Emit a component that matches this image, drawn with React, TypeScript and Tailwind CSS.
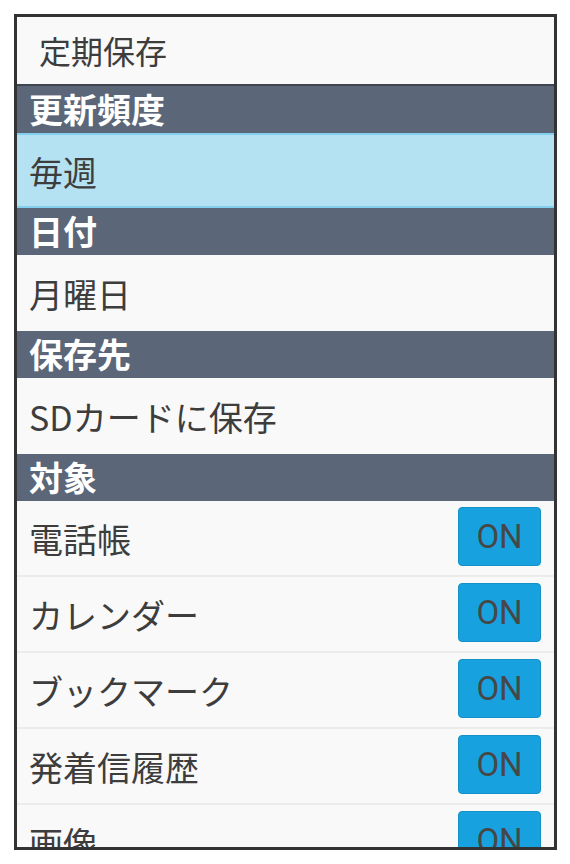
import React from "react";

const jp = { fontFamily: '"Noto Sans CJK JP", "Noto Sans", sans-serif' };

function Header({ label }: { label: string }) {
  return (
    <div className="h-[47px] shrink-0 bg-[#5b6678] flex items-center pl-[12px] text-white font-bold text-[34px] leading-none">
      <span className="-mt-[2px]">{label}</span>
    </div>
  );
}

function Row({ label, selected }: { label: string; selected?: boolean }) {
  return (
    <div
      className={
        selected
          ? "h-[75px] shrink-0 bg-[#b5e2f3] border-y-2 border-[#82d0ee] flex items-center pl-[12px] text-[34px] text-[#3d3d3d] leading-none"
          : "h-[76px] shrink-0 bg-[#f9f9f9] flex items-center pl-[12px] text-[34px] text-[#3d3d3d] leading-none"
      }
    >
      <span className="mt-[2px]">{label}</span>
    </div>
  );
}

function ToggleRow({ label }: { label: string }) {
  return (
    <div className="h-[76px] shrink-0 bg-[#f9f9f9] border-b-2 border-[#ececec] flex items-center justify-between pl-[12px] pr-[13px] text-[34px] text-[#3d3d3d] leading-none">
      <span className="mt-[2px]">{label}</span>
      <div
        className="w-[83px] h-[59px] mb-[3px] rounded-[4px] bg-[#17a2df] border border-[#1591c8] flex items-center justify-center text-[33px] text-[#474747]"
        style={{ fontFamily: 'Roboto, "Liberation Sans", sans-serif' }}
      >
        ON
      </div>
    </div>
  );
}

export default function App() {
  return (
    <div className="w-[570px] h-[864px] bg-white pt-[14px] pl-[14px]" style={jp}>
      <div className="w-[543px] h-[836px] border-[3px] border-[#333333] overflow-hidden flex flex-col bg-[#f9f9f9]">
        <div className="h-[69px] shrink-0 bg-[#f9f9f9] border-b-2 border-[#3f4550] flex items-center pl-[22px] text-[32px] text-[#3d3d3d] leading-none">
          <span className="-mt-[2px]">定期保存</span>
        </div>
        <Header label="更新頻度" />
        <Row label="毎週" selected />
        <Header label="日付" />
        <Row label="月曜日" />
        <Header label="保存先" />
        <Row label="SDカードに保存" />
        <Header label="対象" />
        <ToggleRow label="電話帳" />
        <ToggleRow label="カレンダー" />
        <ToggleRow label="ブックマーク" />
        <ToggleRow label="発着信履歴" />
        <ToggleRow label="画像" />
      </div>
    </div>
  );
}
